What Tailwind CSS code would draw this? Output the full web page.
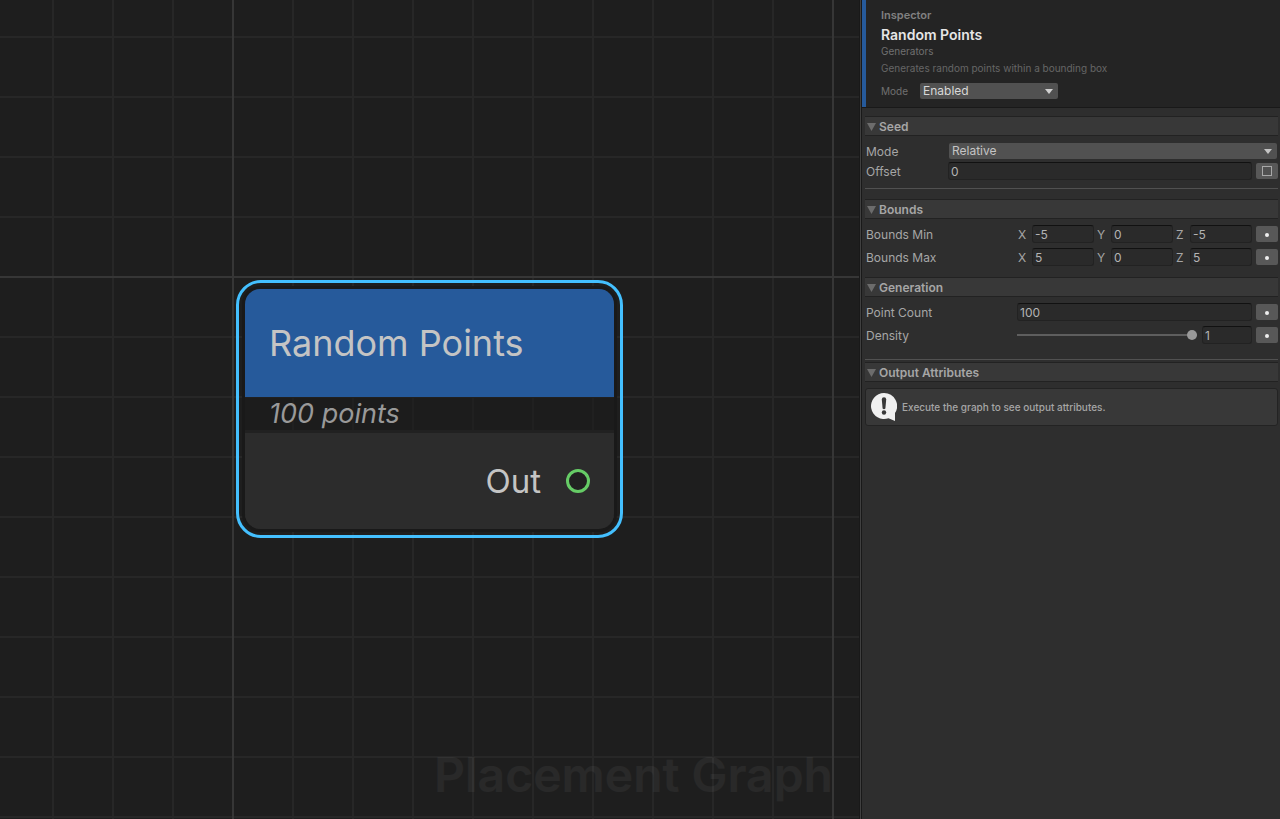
<!DOCTYPE html>
<html lang="en">
<head>
<meta charset="utf-8">
<meta name="viewport" content="width=device-width, initial-scale=1">
<title>Placement Graph</title>
<script src="https://cdn.jsdelivr.net/npm/@tailwindcss/browser@4"></script>
</head>
<body class="flex min-h-screen overflow-hidden bg-[#1e1e1e] font-['Inter','Liberation_Sans',sans-serif] text-[12px] leading-4 text-[#a6a6a6]">

<!-- Graph canvas -->
<main class="relative min-w-0 flex-1 overflow-hidden">
  <svg class="absolute inset-0 size-full" aria-hidden="true">
    <defs>
      <pattern id="minor" x="52" y="36" width="60" height="60" patternUnits="userSpaceOnUse">
        <path d="M0 0H60V2H2V60H0Z" fill="#272727"/>
      </pattern>
      <pattern id="major" x="232" y="276" width="600" height="600" patternUnits="userSpaceOnUse">
        <path d="M0 0H600V2H2V600H0Z" fill="#363636"/>
      </pattern>
    </defs>
    <rect width="100%" height="100%" fill="url(#minor)"/>
    <rect width="100%" height="100%" fill="url(#major)"/>
  </svg>

  <p class="absolute right-[26px] bottom-4 text-[48px] leading-[56px] font-semibold whitespace-nowrap text-white/5">Placement Graph</p>

  <article class="absolute top-[280px] left-[236px] w-[387px] rounded-[25px] border-3 border-[#44c0ff] p-[3px]">
    <div class="overflow-hidden rounded-[18px] border-3 border-[#191919]">
      <header class="flex h-[108px] items-center rounded-t-[12px] bg-[#265a9b] px-6">
        <h2 class="text-[36px] leading-[44px] font-normal text-[#c4c4c4]">Random Points</h2>
      </header>
      <p class="h-[33px] bg-[#191919]/50 px-6 text-[27px] leading-[33px] font-normal text-[#999999] italic">100 points</p>
      <div class="h-[3px] bg-[#212121]"></div>
      <div class="flex h-24 items-center justify-end gap-[25px] rounded-b-[12px] bg-[#2d2d2d]/90 pr-6 text-[33px] leading-10 font-normal text-[#c4c4c4]">
        <span>Out</span>
        <button type="button" aria-label="Out port" class="size-6 rounded-full border-3 border-[#66cc66] bg-[#212121]"></button>
      </div>
    </div>
  </article>
</main>

<!-- Inspector -->
<aside class="w-[421px] shrink-0 border-l border-[#191919] bg-[#2e2e2e]">
 <div class="min-h-screen border-l border-[#404040]">
  <div class="min-h-screen border-l border-[#191919]">
  <header class="border-b border-[#191919] bg-[#242424]">
    <div class="h-[107px] border-l-4 border-[#265a9b] pt-2 pl-[15px]">
      <p class="text-[11px] leading-[14px] font-semibold text-[#808080]">Inspector</p>
      <h1 class="mt-1 text-[14px] leading-[18px] font-semibold text-[#e6e6e6]">Random Points</h1>
      <p class="text-[10px] leading-[14px] text-[#707070]">Generators</p>
      <p class="mt-[3px] text-[10px] leading-[14px] text-[#666666]">Generates random points within a bounding box</p>
      <div class="mt-2 flex items-center">
        <label for="node-mode" class="w-[39px] text-[10px] text-[#707070]">Mode</label>
        <div class="relative w-[138px]">
          <select id="node-mode" class="block h-4 w-full appearance-none rounded-[2px] bg-[#515151] pr-5 pl-[3px] text-[12px] leading-4 text-[#d8d8d8]"><option>Enabled</option><option>Disabled</option></select>
          <svg class="pointer-events-none absolute top-[6px] right-[5px] h-[5px] w-2" viewBox="0 0 8 5" aria-hidden="true"><path d="M0 0H8L4 5Z" fill="#d0d0d0"/></svg>
        </div>
      </div>
    </div>
  </header>

  <div class="pt-2 pr-[2px] pl-[3px]">
    <!-- Seed -->
    <section>
      <button type="button" class="flex h-5 w-full items-center gap-[3px] border-y border-[#222222] bg-[#383838] pt-[2px] pl-[2px] font-semibold">
        <svg class="h-2 w-[9px]" viewBox="0 0 9 8" aria-hidden="true"><path d="M0 0H9L4.500 8Z" fill="#6c6c6c"/></svg>Seed
      </button>
      <div class="mt-[7px] flex h-4 items-center pl-[1px]">
        <label for="seed-mode" class="w-[83px] pt-[2px]">Mode</label>
        <div class="relative mr-[1px] flex-1">
          <select id="seed-mode" class="block h-4 w-full appearance-none rounded-[2px] bg-[#515151] pr-5 pl-[3px] text-[12px] leading-4 text-[#c4c4c4]"><option>Relative</option><option>Absolute</option></select>
          <svg class="pointer-events-none absolute top-[6px] right-[5px] h-[5px] w-2" viewBox="0 0 8 5" aria-hidden="true"><path d="M0 0H8L4 5Z" fill="#c4c4c4"/></svg>
        </div>
      </div>
      <div class="mt-[3px] flex h-[18px] items-center pl-[1px]">
        <label for="seed-offset" class="w-[82px] pt-[2px]">Offset</label>
        <input id="seed-offset" type="text" value="0" class="h-[18px] min-w-0 flex-1 rounded-[3px] border border-[#222222] border-t-[#111111] bg-[#2a2a2a] px-[2px] text-[12px] text-[#b4b4b4]">
        <button type="button" aria-label="Expose offset" class="ml-1 flex h-4 w-[22px] items-center justify-center rounded-[2px] bg-[#585858]"><span class="size-[10px] border border-[#a8a8a8] bg-[#515151]"></span></button>
      </div>
      <hr class="mt-2 border-[#515151]">
    </section>

    <!-- Bounds -->
    <section class="mt-[10px]">
      <button type="button" class="flex h-5 w-full items-center gap-[3px] border-y border-[#222222] bg-[#383838] pt-[2px] pl-[2px] font-semibold">
        <svg class="h-2 w-[9px]" viewBox="0 0 9 8" aria-hidden="true"><path d="M0 0H9L4.500 8Z" fill="#6c6c6c"/></svg>Bounds
      </button>
      <div role="group" aria-labelledby="bmin" class="mt-[6px] flex h-[18px] items-center pl-[1px]">
        <span id="bmin" class="w-[151px] pt-[2px]">Bounds Min</span>
        <div class="grid flex-1 grid-cols-3 gap-[2px]">
          <div class="flex items-center"><label for="minx" class="w-[15px] shrink-0 pt-[2px] pl-[1px]">X</label><input id="minx" type="text" value="-5" class="h-[18px] w-full min-w-0 rounded-[3px] border border-[#222222] border-t-[#111111] bg-[#2a2a2a] px-[2px] text-[12px] text-[#b4b4b4]"></div>
          <div class="flex items-center"><label for="miny" class="w-[15px] shrink-0 pt-[2px] pl-[1px]">Y</label><input id="miny" type="text" value="0" class="h-[18px] w-full min-w-0 rounded-[3px] border border-[#222222] border-t-[#111111] bg-[#2a2a2a] px-[2px] text-[12px] text-[#b4b4b4]"></div>
          <div class="flex items-center"><label for="minz" class="w-[15px] shrink-0 pt-[2px] pl-[1px]">Z</label><input id="minz" type="text" value="-5" class="h-[18px] w-full min-w-0 rounded-[3px] border border-[#222222] border-t-[#111111] bg-[#2a2a2a] px-[2px] text-[12px] text-[#b4b4b4]"></div>
        </div>
        <button type="button" aria-label="Expose bounds min" class="ml-1 flex h-4 w-[22px] items-center justify-center rounded-[2px] bg-[#585858] pt-[2px]"><span class="size-1 rounded-full bg-[#eeeeee]"></span></button>
      </div>
      <div role="group" aria-labelledby="bmax" class="mt-[5px] flex h-[18px] items-center pl-[1px]">
        <span id="bmax" class="w-[151px] pt-[2px]">Bounds Max</span>
        <div class="grid flex-1 grid-cols-3 gap-[2px]">
          <div class="flex items-center"><label for="maxx" class="w-[15px] shrink-0 pt-[2px] pl-[1px]">X</label><input id="maxx" type="text" value="5" class="h-[18px] w-full min-w-0 rounded-[3px] border border-[#222222] border-t-[#111111] bg-[#2a2a2a] px-[2px] text-[12px] text-[#b4b4b4]"></div>
          <div class="flex items-center"><label for="maxy" class="w-[15px] shrink-0 pt-[2px] pl-[1px]">Y</label><input id="maxy" type="text" value="0" class="h-[18px] w-full min-w-0 rounded-[3px] border border-[#222222] border-t-[#111111] bg-[#2a2a2a] px-[2px] text-[12px] text-[#b4b4b4]"></div>
          <div class="flex items-center"><label for="maxz" class="w-[15px] shrink-0 pt-[2px] pl-[1px]">Z</label><input id="maxz" type="text" value="5" class="h-[18px] w-full min-w-0 rounded-[3px] border border-[#222222] border-t-[#111111] bg-[#2a2a2a] px-[2px] text-[12px] text-[#b4b4b4]"></div>
        </div>
        <button type="button" aria-label="Expose bounds max" class="ml-1 flex h-4 w-[22px] items-center justify-center rounded-[2px] bg-[#585858] pt-[2px]"><span class="size-1 rounded-full bg-[#eeeeee]"></span></button>
      </div>
    </section>

    <!-- Generation -->
    <section class="mt-[11px]">
      <button type="button" class="flex h-5 w-full items-center gap-[3px] border-y border-[#222222] bg-[#383838] pt-[2px] pl-[2px] font-semibold">
        <svg class="h-2 w-[9px]" viewBox="0 0 9 8" aria-hidden="true"><path d="M0 0H9L4.500 8Z" fill="#6c6c6c"/></svg>Generation
      </button>
      <div class="mt-[6px] flex h-[18px] items-center pl-[1px]">
        <label for="count" class="w-[151px] pt-[2px]">Point Count</label>
        <input id="count" type="text" value="100" class="h-[18px] min-w-0 flex-1 rounded-[3px] border border-[#222222] border-t-[#111111] bg-[#2a2a2a] px-[2px] text-[12px] text-[#b4b4b4]">
        <button type="button" aria-label="Expose point count" class="ml-1 flex h-4 w-[22px] items-center justify-center rounded-[2px] bg-[#585858] pt-[2px]"><span class="size-1 rounded-full bg-[#eeeeee]"></span></button>
      </div>
      <div class="mt-[5px] flex h-[18px] items-center pl-[1px]">
        <label for="density" class="w-[151px] pt-[2px]">Density</label>
        <input id="density" type="range" min="0" max="1" step="0.01" value="1" class="h-[10px] min-w-0 flex-1 appearance-none bg-transparent [&::-webkit-slider-runnable-track]:h-[2px] [&::-webkit-slider-runnable-track]:bg-[#5e5e5e] [&::-webkit-slider-thumb]:-mt-1 [&::-webkit-slider-thumb]:size-[10px] [&::-webkit-slider-thumb]:appearance-none [&::-webkit-slider-thumb]:rounded-full [&::-webkit-slider-thumb]:bg-[#999999]">
        <input type="text" value="1" aria-label="Density value" class="ml-[5px] h-[18px] w-[50px] rounded-[3px] border border-[#222222] border-t-[#111111] bg-[#2a2a2a] px-[2px] text-[12px] text-[#b4b4b4]">
        <button type="button" aria-label="Expose density" class="ml-1 flex h-4 w-[22px] items-center justify-center rounded-[2px] bg-[#585858] pt-[2px]"><span class="size-1 rounded-full bg-[#eeeeee]"></span></button>
      </div>
      <hr class="mt-[15px] border-[#515151]">
    </section>

    <!-- Output attributes -->
    <section class="mt-[2px]">
      <button type="button" class="flex h-5 w-full items-center gap-[3px] border-y border-[#222222] bg-[#383838] pt-[2px] pl-[2px] font-semibold">
        <svg class="h-2 w-[9px]" viewBox="0 0 9 8" aria-hidden="true"><path d="M0 0H9L4.500 8Z" fill="#6c6c6c"/></svg>Output Attributes
      </button>
      <div class="mt-[6px] flex h-[38px] items-center gap-[5px] rounded-[3px] border border-[#232323] bg-[#383838] pl-[5px] text-[10px] font-medium">
        <svg class="h-7 w-[26px]" viewBox="0 0 26 28" aria-hidden="true"><path d="M13 0a13 13 0 1 0 4.500 25.200L24 28V20A13 13 0 0 0 13 0Z" fill="#f0f0f0"/><path d="M10.800 6.500Q10.800 4.300 13 4.300T15.200 6.500L14.400 15.500Q13 17 11.600 15.500Z" fill="#383838"/><circle cx="13" cy="19.500" r="2.200" fill="#383838"/></svg>
        <p>Execute the graph to see output attributes.</p>
      </div>
    </section>
  </div>
  </div>
 </div>
</aside>
</body>
</html>
